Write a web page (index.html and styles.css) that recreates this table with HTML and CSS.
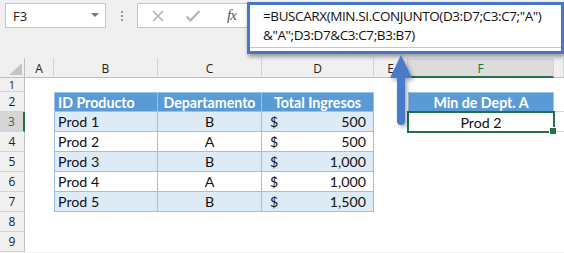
FILE: index.html
```html
<!DOCTYPE html>
<html lang="es">
<head>
<meta charset="utf-8">
<title>BUSCARX</title>
<link rel="stylesheet" href="styles.css">
</head>
<body>
<div class="app">
  <div class="toolbar">
    <div class="namebox"><span class="ref">F3</span><span class="caret"></span></div>
    <div class="grip"><i></i><i></i><i></i></div>
    <div class="fnbox">
      <svg class="ico" width="14" height="14" viewBox="0 0 14 14"><path d="M2 2 L12 12 M12 2 L2 12" stroke="#b4b4b4" stroke-width="1.6" fill="none"/></svg>
      <svg class="ico" width="16" height="14" viewBox="0 0 16 14"><path d="M1.5 7.5 L5.5 11.5 L14.5 2" stroke="#b4b4b4" stroke-width="2.2" fill="none"/></svg>
      <span class="fx">fx</span>
    </div>
  </div>

  <div class="sheet">
    <div class="corner"><span class="tri"></span></div>
    <div class="ch">A</div>
    <div class="ch">B</div>
    <div class="ch">C</div>
    <div class="ch">D</div>
    <div class="ch">E</div>
    <div class="ch sel">F</div>
    <div class="ch"></div>

    <div class="rh r1">1</div>
    <div class="c"></div><div class="c"></div><div class="c"></div><div class="c"></div><div class="c"></div><div class="c"></div><div class="c"></div>

    <div class="rh">2</div>
    <div class="c"></div>
    <div class="t th first left">ID Producto</div>
    <div class="t th">Departamento</div>
    <div class="t th">Total Ingresos</div>
    <div class="c"></div>
    <div class="t th first">Min de Dept. A</div>
    <div class="c g"></div>

    <div class="rh rsel">3</div>
    <div class="c"></div>
    <div class="t band first left">Prod 1</div>
    <div class="t band">B</div>
    <div class="t band num"><span>$</span><span>500</span></div>
    <div class="c"></div>
    <div class="t active first">Prod 2</div>
    <div class="c g"></div>

    <div class="rh">4</div>
    <div class="c"></div>
    <div class="t first left">Prod 2</div>
    <div class="t">A</div>
    <div class="t num"><span>$</span><span>500</span></div>
    <div class="c"></div><div class="c"></div><div class="c"></div>

    <div class="rh">5</div>
    <div class="c"></div>
    <div class="t band first left">Prod 3</div>
    <div class="t band">B</div>
    <div class="t band num"><span>$</span><span>1,000</span></div>
    <div class="c"></div><div class="c"></div><div class="c"></div>

    <div class="rh">6</div>
    <div class="c"></div>
    <div class="t first left">Prod 4</div>
    <div class="t">A</div>
    <div class="t num"><span>$</span><span>1,000</span></div>
    <div class="c"></div><div class="c"></div><div class="c"></div>

    <div class="rh">7</div>
    <div class="c"></div>
    <div class="t band first left">Prod 5</div>
    <div class="t band">B</div>
    <div class="t band num"><span>$</span><span>1,500</span></div>
    <div class="c"></div><div class="c"></div><div class="c"></div>

    <div class="rh">8</div>
    <div class="c"></div><div class="c"></div><div class="c"></div><div class="c"></div><div class="c"></div><div class="c"></div><div class="c"></div>

    <div class="rh">9</div>
    <div class="c"></div><div class="c"></div><div class="c"></div><div class="c"></div><div class="c"></div><div class="c"></div><div class="c"></div>
  </div>

  <div class="formula">
    <div class="ftext">=BUSCARX(MIN.SI.CONJUNTO(D3:D7;C3:C7;"A")<br>&amp;"A";D3:D7&amp;C3:C7;B3:B7)</div>
  </div>

  <svg class="arrow" width="40" height="84" viewBox="0 0 40 84">
    <path d="M17 5 L28 28 L21 28 L21 71 Q21 75 17 75 Q13 75 13 71 L13 28 L6 28 Z" fill="#4a7bcb"/>
  </svg>
</div>
</body>
</html>
```
FILE: styles.css
```css
* { box-sizing: border-box; }
html, body { margin: 0; padding: 0; }
body { background: #f0f0f0; }

.app {
  position: relative;
  width: 564px;
  height: 253px;
  overflow: hidden;
  background: #f0f0f0;
  font-family: "Open Sans", "Noto Sans", sans-serif;
}

.toolbar {
  display: flex;
  align-items: flex-start;
  height: 58px;
  padding: 3px 0 0 5px;
}

.namebox {
  width: 101px;
  height: 25px;
  background: #fff;
  border: 1px solid #c6c6c6;
  display: flex;
  align-items: center;
  justify-content: space-between;
  padding: 0 6px 0 7px;
  font-size: 13px;
  color: #222;
}
.caret {
  width: 0; height: 0;
  border-left: 4px solid transparent;
  border-right: 4px solid transparent;
  border-top: 4px solid #777;
  margin-top: -2px;
}

.grip {
  width: 31px;
  height: 25px;
  display: flex;
  flex-direction: column;
  align-items: center;
  justify-content: center;
  gap: 2px;
}
.grip i {
  display: block;
  width: 2px; height: 2px;
  background: #9a9a9a;
}

.fnbox {
  flex: 1;
  height: 25px;
  background: #fff;
  border: 1px solid #c6c6c6;
  border-right: none;
  display: flex;
  align-items: center;
  padding-left: 13px;
  gap: 20px;
}
.fnbox .ico { display: block; }
.fx {
  font-family: "Liberation Serif", "DejaVu Serif", serif;
  font-style: italic;
  font-size: 15px;
  color: #555;
  margin-left: 6px;
  letter-spacing: -1px;
}

.sheet {
  display: grid;
  grid-template-columns: 25px 29px 104px 104px 112px 34px 146px 10px;
  grid-template-rows: 20px 14px repeat(8, 20px);
  background: #fff;
}

.corner {
  background: #f0f0f0;
  border-right: 1px solid #bfbfbf;
  border-bottom: 1px solid #bfbfbf;
  position: relative;
}
.tri {
  position: absolute;
  right: 2px; bottom: 2px;
  width: 0; height: 0;
  border-left: 13px solid transparent;
  border-bottom: 12px solid #c4c4c4;
}

.ch {
  background: #f0f0f0;
  border-right: 1px solid #d4d4d4;
  border-bottom: 1px solid #bfbfbf;
  display: flex;
  align-items: center;
  justify-content: center;
  font-size: 12px;
  color: #222;
  padding-top: 2px;
}
.ch.sel {
  background: #dcdcdc;
  color: #217346;
  border-bottom: 2px solid #217346;
}

.rh {
  background: #f0f0f0;
  border-right: 1px solid #bfbfbf;
  border-bottom: 1px solid #d4d4d4;
  display: flex;
  align-items: center;
  justify-content: center;
  font-size: 12px;
  line-height: 14px;
  color: #222;
  overflow: hidden;
}
.rh.r1 { font-size: 11px; line-height: 12px; }
.rh.rsel {
  background: #d6d6d6;
  color: #217346;
  border-right: 2px solid #217346;
}

.c { background: #fff; }
.c.g { border-bottom: 1px solid #d4d4d4; }

.t {
  font-family: "Lato", "Liberation Sans", sans-serif;
  font-size: 14.2px;
  color: #111;
  background: #fff;
  border-right: 1px solid #9bc2e6;
  border-bottom: 1px solid #9bc2e6;
  display: flex;
  align-items: center;
  justify-content: center;
  padding: 0 3px;
  white-space: nowrap;
}
.t.first { border-left: 1px solid #9bc2e6; }
.t.left { justify-content: flex-start; }
.t.th {
  background: #5b9bd5;
  color: #fff;
  font-weight: bold;
  border-top: 1px solid #9bc2e6;
}
.t.band { background: #ddebf7; }
.t.num {
  justify-content: space-between;
  padding: 0 7px 0 8px;
}

.t.active {
  position: relative;
  border: 2px solid #217346;
  margin: -1px -1px -1px -1px;
  z-index: 1;
}
.t.active::after {
  content: "";
  position: absolute;
  right: -4px;
  bottom: -4px;
  width: 6px;
  height: 6px;
  background: #217346;
  border: 1px solid #fff;
}

.formula {
  position: absolute;
  left: 247px;
  top: 2px;
  width: 317px;
  height: 52px;
  background: #fff;
  border: 3px solid #4a76c6;
  box-shadow: 1px 3px 4px rgba(0, 0, 0, 0.35);
  z-index: 5;
}
.ftext {
  height: 43px;
  border-bottom: 1px solid #c6c6c6;
  padding: 2px 0 0 13px;
  font-size: 13.5px;
  letter-spacing: -0.4px;
  line-height: 19px;
  color: #111;
  white-space: nowrap;
}

.arrow {
  position: absolute;
  left: 384px;
  top: 50px;
  z-index: 6;
  filter: drop-shadow(2px 2px 2px rgba(0, 0, 0, 0.35));
}
```
